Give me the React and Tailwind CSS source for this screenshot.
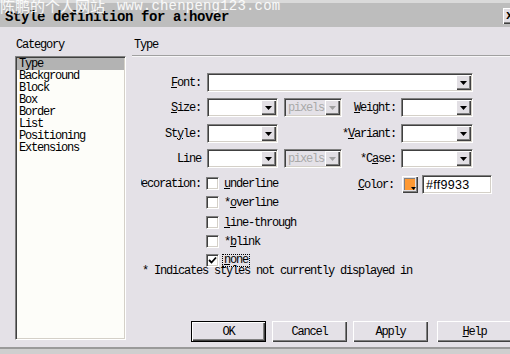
const sunken =
  'border border-t-[#808080] border-l-[#808080] border-b-white border-r-white shadow-[inset_1px_1px_0_#404040,inset_-1px_-1px_0_#d4d0c8]';
const raised =
  'shadow-[inset_1px_1px_0_#ffffff,inset_-1px_-1px_0_#404040,inset_-2px_-2px_0_#808080]';

function Arrow({ color = '#000' }) {
  return (
    <svg width="7" height="4" viewBox="0 0 7 4">
      <polygon points="0,0 7,0 3.5,4" fill={color} />
    </svg>
  );
}

function Select({ w, disabled, children }) {
  return (
    <div className={`${sunken} ${w} flex h-[19px] p-px ${disabled ? 'bg-[#e4e1e7]' : 'bg-white'}`}>
      <div className="flex-1 flex items-center pl-[2px] text-[#a9a9a9]">{children}</div>
      <div className={`w-[15px] h-full flex items-center justify-center bg-[#e2dfe4] ${raised}`}>
        <Arrow color={disabled ? '#a0a0a0' : '#000'} />
      </div>
    </div>
  );
}

function Label({ w, children }) {
  return <div className={`${w} shrink-0 flex justify-end items-center whitespace-nowrap`}>{children}</div>;
}

function Check({ on }) {
  return (
    <div className={`${sunken} w-[13px] h-[13px] bg-white flex items-center justify-center`}>
      {on && (
        <svg width="9" height="9" viewBox="0 0 9 9">
          <path d="M1 4 L3.5 6.5 L8 1.5" stroke="#000" strokeWidth="1.8" fill="none" />
        </svg>
      )}
    </div>
  );
}

function Btn({ w, def, children }) {
  return (
    <div
      className={`${w} shrink-0 h-[21px] flex items-center justify-center bg-[#e4e1e7] ${
        def ? 'border border-black' : ''
      } ${raised}`}
    >
      {children}
    </div>
  );
}

const items = ['Type', 'Background', 'Block', 'Box', 'Border', 'List', 'Positioning', 'Extensions'];

export default function App() {
  return (
    <div className="w-[510px] h-[354px] overflow-hidden relative bg-[#e4e1e7] text-black font-['Liberation_Mono',monospace] text-[12px] tracking-[-1.2px] leading-[12px]">
      {/* title bar */}
      <div className="h-[27px] bg-[#bdbdbd] border-t-[3px] border-[#dadada] flex items-center">
        <div className="ml-[5px] text-[14px] tracking-[-0.4px] font-bold pt-[4px]">Style definition for a:hover</div>
        <div className="flex-1" />
        <div className={`w-[16px] h-[16px] mr-[-9px] mt-[2px] bg-[#e2dfe4] ${raised} flex items-center pl-[3px] font-bold text-[12px]`}>
          x
        </div>
      </div>

      {/* watermark */}
      <div className="absolute left-0 top-[-2px] text-white/90 text-[15px] leading-[16px] tracking-normal whitespace-nowrap flex">
        <span className="w-[104px] font-['Noto_Sans_CJK_SC',sans-serif] tracking-[0px]">陈鹏的个人网站</span>
        <span className="ml-[13px] text-[14px] tracking-[0.2px]">www.chenpeng123.com</span>
      </div>

      {/* body */}
      <div className="h-[320px] flex">
        <div className="w-[132px] shrink-0 pt-[12px] pl-[15px]">
          <div className="h-[12px] pl-[1px]">Category</div>
          <div className={`${sunken} mt-[5px] w-[111px] h-[284px] bg-[#fdfdf9] p-px`}>
            {items.map((it, i) => (
              <div key={it} className={`h-[12px] pl-[2px] ${i === 0 ? 'bg-[#b3b3b3]' : ''}`}>
                {it}
              </div>
            ))}
          </div>
        </div>

        <div className="flex-1 min-w-0 pt-[12px]">
          <div className="h-[12px] pl-[2px]">Type</div>
          <div className="mt-[4px] border-t border-[#a0a0a0] h-[2px] bg-white/70" />

          {/* Font */}
          <div className="mt-[16px] flex h-[19px]">
            <Label w="w-[69px]">
              <u>F</u>ont:
            </Label>
            <div className="ml-[6px]">
              <Select w="w-[266px]" />
            </div>
          </div>

          {/* Size */}
          <div className="mt-[6px] flex h-[19px]">
            <Label w="w-[69px]">
              <u>S</u>ize:
            </Label>
            <div className="ml-[6px]">
              <Select w="w-[71px]" />
            </div>
            <div className="ml-[6px]">
              <Select w="w-[58px]" disabled>
                pixels
              </Select>
            </div>
            <Label w="w-[54px]">
              <u>W</u>eight:
            </Label>
            <div className="ml-[5px]">
              <Select w="w-[72px]" />
            </div>
          </div>

          {/* Style */}
          <div className="mt-[7px] flex h-[19px]">
            <Label w="w-[69px]">
              St<u>y</u>le:
            </Label>
            <div className="ml-[6px]">
              <Select w="w-[71px]" />
            </div>
            <Label w="w-[118px]">
              *<u>V</u>ariant:
            </Label>
            <div className="ml-[5px]">
              <Select w="w-[72px]" />
            </div>
          </div>

          {/* Line */}
          <div className="mt-[6px] flex h-[19px]">
            <Label w="w-[69px]">Line</Label>
            <div className="ml-[6px]">
              <Select w="w-[71px]" />
            </div>
            <div className="ml-[6px]">
              <Select w="w-[58px]" disabled>
                pixels
              </Select>
            </div>
            <Label w="w-[54px]">
              *C<u>a</u>se:
            </Label>
            <div className="ml-[5px]">
              <Select w="w-[72px]" />
            </div>
          </div>

          {/* Decoration + Color */}
          <div className="mt-[7px] flex">
            <div className="w-[69px] shrink-0 pl-[9px] pt-[2px]">
              <div className="w-[60px] h-[13px] overflow-hidden flex justify-end items-center whitespace-nowrap">
                Decoration:
              </div>
            </div>
            <div className="ml-[5px] w-[150px] shrink-0 pt-[2px]">
              {[
                [<u key="u">u</u>, 'nderline'],
                ['*', <u key="o">o</u>, 'verline'],
                [<u key="l">l</u>, 'ine-through'],
                ['*', <u key="b">b</u>, 'link'],
              ].map((lbl, i) => (
                <div key={i} className={`flex items-center h-[13px] ${i === 0 ? '' : i === 2 ? 'mt-[7px]' : 'mt-[6px]'}`}>
                  <Check />
                  <span className="ml-[5px]">{lbl}</span>
                </div>
              ))}
              <div className="flex items-center h-[13px] mt-[6px]">
                <Check on />
                <span className="ml-[3px] px-[1px] border border-dotted border-black leading-[11px]">
                  <u>n</u>one
                </span>
              </div>
            </div>
            <Label w="w-[38px] h-[19px]">
              <u>C</u>olor:
            </Label>
            <div className={`ml-[8px] mt-[1px] w-[16px] h-[17px] shrink-0 bg-[#e2dfe4] ${raised} p-[2px] relative`}>
              <div className="w-[11px] h-[12px] bg-[#ff9933] border-t border-l border-[#808080]" />
              <div className="absolute right-[2px] bottom-[3px]">
                <svg width="5" height="3" viewBox="0 0 5 3">
                  <polygon points="0,0 5,0 2.5,3" fill="#000" />
                </svg>
              </div>
            </div>
            <div className={`${sunken} ml-[4px] w-[70px] h-[19px] shrink-0 bg-white flex items-center pl-[3px] font-['Liberation_Sans',sans-serif] text-[12.5px] tracking-[0.3px]`}>
              #ff9933
            </div>
          </div>

          <div className="mt-[-2px] pl-[10px] h-[12px] whitespace-nowrap">* Indicates styles not currently displayed in</div>

          {/* buttons */}
          <div className="mt-[44px] ml-[59px] flex">
            <Btn w="w-[75px]" def>
              OK
            </Btn>
            <div className="ml-[6px] shrink-0">
              <Btn w="w-[75px]">Cancel</Btn>
            </div>
            <div className="ml-[6px] shrink-0">
              <Btn w="w-[75px]">Apply</Btn>
            </div>
            <div className="ml-[9px] shrink-0">
              <Btn w="w-[75px]">
                <u>H</u>elp
              </Btn>
            </div>
          </div>
        </div>
      </div>

      <div className="h-[7px] border-t-2 border-[#9a9a9a] bg-[#cfcfcf]" />
    </div>
  );
}
